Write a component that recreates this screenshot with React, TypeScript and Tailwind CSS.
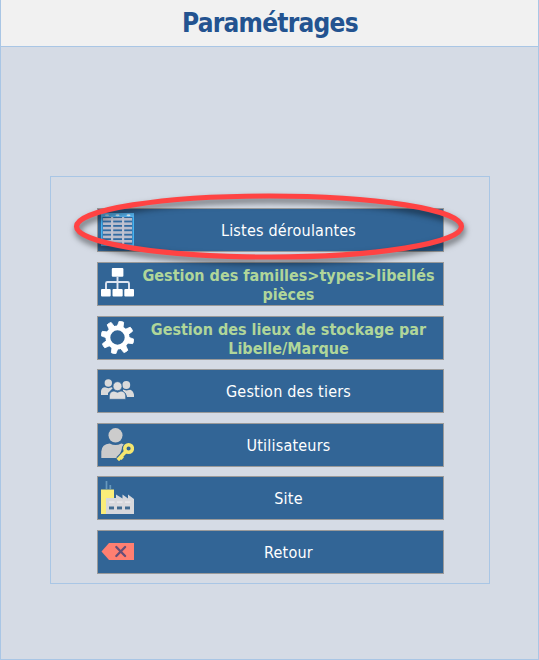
import type { ReactNode } from "react";

const Icon = ({ children }: { children: ReactNode }) => (
  <svg className="mb-px ml-[3px] h-[33px] w-[33px] shrink-0" viewBox="0 0 33 33" aria-hidden="true">
    {children}
  </svg>
);

const TableIcon = () => (
  <Icon>
    <rect width="33" height="33" fill="#45b4f2" />
    <rect width="33" height="4" fill="#58b8f5" />
    <rect x="1.500" y="4" width="30" height="27.500" fill="#326ba2" />
    {[6.2, 10.6, 15, 19.4, 23.8, 28.2].map((y) => (
      <rect key={y} x="2" y={y - 1.2} width="29" height="2.600" fill="#b9bccb" />
    ))}
    <rect x="10" y="4" width="2.200" height="28" fill="#c1c4d2" />
    <rect x="21" y="4" width="2.200" height="28" fill="#c1c4d2" />
    <ellipse cx="6" cy="2.3" rx="2" ry="1" fill="#c5dbea" />
    <ellipse cx="16.5" cy="2.3" rx="2" ry="1" fill="#d9efff" />
    <ellipse cx="27.5" cy="2.3" rx="2" ry="1" fill="#e2f4ff" />
  </Icon>
);

const TreeIcon = () => (
  <Icon>
    <path d="M16.5 10V22M5 22v-5.5q0-1.500 1.500-1.500h20q1.500 0 1.500 1.500V22" fill="none" stroke="#dfe5f1" strokeWidth="1.9" />
    <g fill="#fff">
      <rect x="10.8" y="1" width="11.6" height="8.700" rx="1" />
      <rect x="0" y="22" width="9.700" height="7.500" rx="1" />
      <rect x="11.500" y="22" width="10.200" height="7.500" rx="1" />
      <rect x="23.300" y="22" width="9.700" height="7.500" rx="1" />
    </g>
  </Icon>
);

const GearIcon = () => (
  <Icon>
    <g transform="rotate(14 16.5 16.5)" fill="#fff">
      {[0, 45, 90, 135, 180, 225, 270, 315].map((a) => (
        <path key={a} d="M13.500 6 14.200 .3q2.300-.6 4.600 0L19.500 6z" stroke="#fff" strokeWidth=".8" strokeLinejoin="round" transform={`rotate(${a} 16.5 16.5)`} />
      ))}
    </g>
    <circle cx="16.5" cy="16.500" r="9.600" fill="none" stroke="#fff" strokeWidth="4.800" />
  </Icon>
);

const GroupIcon = () => (
  <Icon>
    <g fill="#dadada">
      <circle cx="7.300" cy="9" r="3.700" />
      <path d="M0 21v-4q.5-3.800 4-3.800l3.300 1 3.300-1q1.100.3 1.100 1.100L7 19v2z" />
      <circle cx="25.300" cy="11" r="3.900" />
      <path d="M22 15.500l3.300 1 4-.8q3 1 3.700 5V23h-7q-.5-4-4-6z" />
    </g>
    <g fill="#dedede" stroke="#326596" strokeWidth=".7">
      <circle cx="16.500" cy="12.200" r="4.500" />
      <path d="M8.300 25.300v-3.500q.5-4.500 4.700-4.800l3.500 1.300 3.500-1.300q4.200.3 4.700 4.800v3.500z" />
    </g>
  </Icon>
);

const UserKeyIcon = () => (
  <Icon>
    <ellipse cx="14.500" cy="7.300" rx="7" ry="7.200" fill="#ccc" />
    <path d="M.3 30v-6.500Q.8 16 8.700 15.500q5.800 3.200 11.600 0l2.500.8-4 10-3 3.700z" fill="#cbcbcb" />
    <g fill="none" stroke="#326596" strokeWidth="5">
      <circle cx="27.300" cy="21" r="4" />
      <path d="m24 24-7 7" />
    </g>
    <g fill="none" stroke="#f5e66f" strokeWidth="3.500">
      <circle cx="27.600" cy="20.500" r="3.800" />
      <path d="m24.800 23.500-8 8.500M19 28l2.800 2.600" />
    </g>
  </Icon>
);

const FactoryIcon = () => (
  <Icon>
    <path d="M5.500 8V0M9.300 8V4" stroke="#6899bd" strokeWidth="1.700" />
    <path d="M0 8.500h13V17H5v16H0z" fill="#fbed79" />
    <path d="M5 33V17h10v-3.500l6.500 4v-4l5.500 4v-4l6 4.500v15z" fill="#d7d8dc" />
    {[8, 16, 24].map((x) => (
      <g key={x} fill="#416b91">
        <rect x={x} y="20.500" width="5.500" height="1.200" fill="#ededf0" />
        <rect x={x} y="25.500" width="5" height="2.900" />
      </g>
    ))}
  </Icon>
);

const BackIcon = () => (
  <Icon>
    <path d="M.5 16.500 8 8h25v17H8z" fill="#ff7f71" />
    <path d="m15.300 12 8.800 9m0-9-8.800 9" fill="none" stroke="#654e78" strokeWidth="2.300" strokeLinecap="round" />
  </Icon>
);

const plain = "text-[16px] text-white tracking-[0.2px]";
const green = "pt-[2px] text-[16px] font-bold text-[#b0d69a]";

const MenuButton = ({ icon, className, children }: { icon: ReactNode; className: string; children: ReactNode }) => (
  <button className="flex h-[44px] w-full shrink-0 items-center border border-[#9a9a9a] bg-[#326596] text-center">
    {icon}
    <span className={`flex-1 pl-[1px] leading-[19px] whitespace-nowrap ${className}`}>{children}</span>
  </button>
);

export default function App() {
  return (
    <div className="relative flex h-[660px] w-[539px] flex-col items-center overflow-hidden border border-t-0 border-[#a9c6e5] bg-[#d5dbe5] font-['DejaVu_Sans_Condensed','DejaVu_Sans',sans-serif] [font-stretch:condensed]">
      <header className="flex h-[47px] w-full shrink-0 items-center justify-center border-b border-[#a9c6e5] bg-[#f1f1f1]">
        <h1 className="pl-px text-[26px] leading-[32px] font-bold tracking-[-0.75px] text-[#235390]">Paramétrages</h1>
      </header>
      <main className="mt-[129px] flex h-[408px] w-[440px] shrink-0 flex-col border border-[#a9c6e5] pt-[31px] pr-[45px] pl-[46px]">
        <nav className="flex flex-col gap-[10px]">
          <MenuButton className={plain} icon={<TableIcon />}>Listes déroulantes</MenuButton>
          <MenuButton className={green} icon={<TreeIcon />}>Gestion des familles&gt;types&gt;libellés<br />pièces</MenuButton>
          <div className="-mb-px flex">
            <MenuButton className={green} icon={<GearIcon />}>Gestion des lieux de stockage par<br />Libelle/Marque</MenuButton>
          </div>
          <MenuButton className={plain} icon={<GroupIcon />}>Gestion des tiers</MenuButton>
          <div className="-mb-px flex">
            <MenuButton className={plain} icon={<UserKeyIcon />}>Utilisateurs</MenuButton>
          </div>
          <MenuButton className={plain} icon={<FactoryIcon />}>Site</MenuButton>
          <MenuButton className={plain} icon={<BackIcon />}>Retour</MenuButton>
        </nav>
      </main>
      <svg className="pointer-events-none absolute top-[180px] left-[59px] h-[100px] w-[420px] drop-shadow-[1px_4px_3px_rgba(0,0,0,0.55)]" viewBox="60 180 420 100" aria-hidden="true">
        <ellipse cx="269" cy="226.500" rx="192.500" ry="30.500" fill="none" stroke="#ff4343" strokeWidth="5.200" />
      </svg>
    </div>
  );
}
